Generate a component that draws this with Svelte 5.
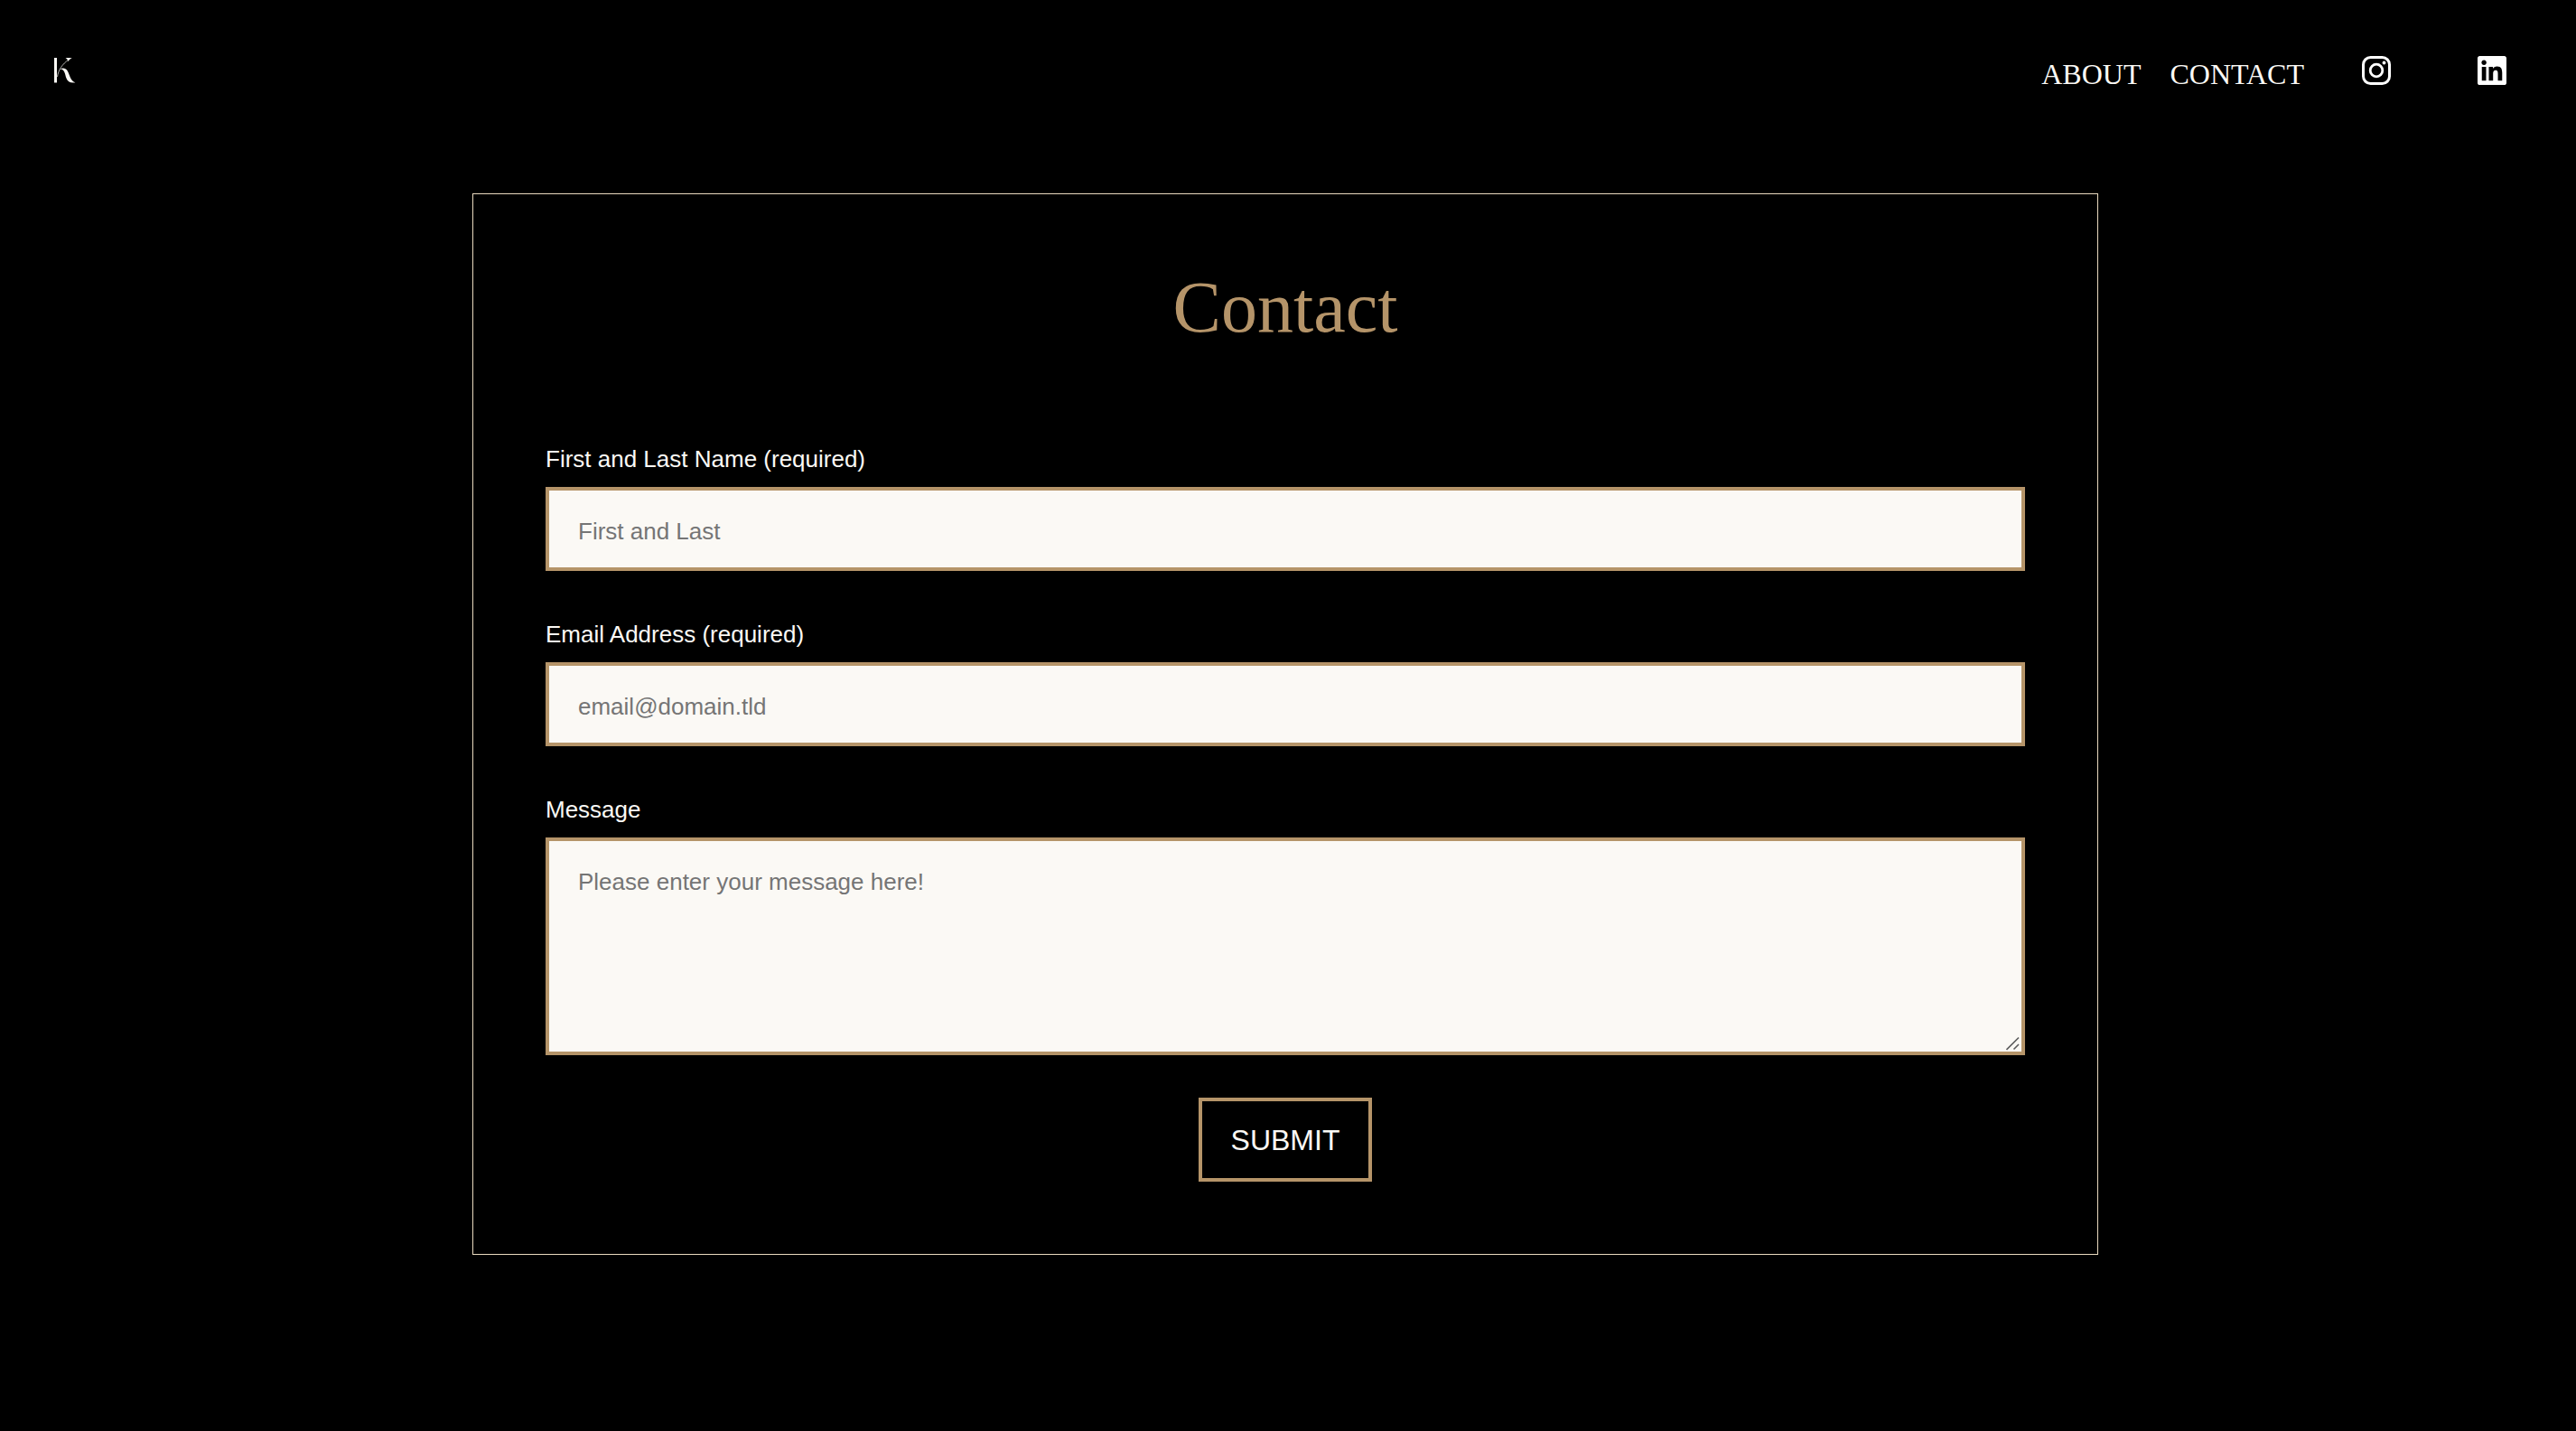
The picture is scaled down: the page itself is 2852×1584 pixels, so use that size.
<script>
  let name = $state('');
  let email = $state('');
  let message = $state('');

  function submit(event) {
    event.preventDefault();
  }
</script>

<svelte:head>
  <title>Contact</title>
</svelte:head>

<header>
  <a class="logo" href="/" aria-label="Home">
    <svg viewBox="0 0 24 28" aria-hidden="true">
      <rect x="0" y="0" width="3" height="27.5" fill="#fbf9f5" />
      <path d="M3.5 21C4.5 13.5 9 7 16 2" fill="none" stroke="#fbf9f5" stroke-width="0.7" />
      <path d="M12.5 0H19.8C17.8 1 16.6 2.2 15.4 4C15 2 14 0.7 12.5 0Z" fill="#fbf9f5" />
      <path
        d="M6.5 12.6C9 10.8 12.7 11 14.6 14.2C17.3 19 18 25.5 23.4 27.3C18.3 28.3 14.8 26.5 13.2 22C12 18 11.2 12 6.5 12.6Z"
        fill="#fbf9f5"
      />
    </svg>
  </a>
  <nav aria-label="Main">
    <a class="link" href="/about">ABOUT</a>
    <a class="link" href="/contact">CONTACT</a>
    <a class="social" href="/instagram" aria-label="Instagram">
      <svg viewBox="0 0 32 32" fill="none" stroke="#fff" aria-hidden="true">
        <rect x="1.5" y="1.5" width="29" height="29" rx="8" stroke-width="3" />
        <circle cx="16" cy="16" r="6.8" stroke-width="2.8" />
        <circle cx="24.5" cy="7.5" r="1.9" fill="#fff" stroke="none" />
      </svg>
    </a>
    <a class="social" href="/linkedin" aria-label="LinkedIn">
      <svg viewBox="0 0 24 24" fill="#fff" aria-hidden="true">
        <path
          d="M20.447 20.452h-3.554v-5.569c0-1.328-.027-3.037-1.852-3.037-1.853 0-2.136 1.445-2.136 2.939v5.667H9.351V9h3.414v1.561h.046c.477-.9 1.637-1.85 3.37-1.85 3.601 0 4.267 2.37 4.267 5.455v6.286zM5.337 7.433c-1.144 0-2.063-.926-2.063-2.065 0-1.138.92-2.063 2.063-2.063 1.14 0 2.064.925 2.064 2.063 0 1.139-.925 2.065-2.064 2.065zm1.782 13.019H3.555V9h3.564v11.452zM22.225 0H1.771C.792 0 0 .774 0 1.729v20.542C0 23.227.792 24 1.771 24h20.451C23.2 24 24 23.227 24 22.271V1.729C24 .774 23.2 0 22.222 0h.003z"
        />
      </svg>
    </a>
  </nav>
</header>

<main>
  <section class="card">
    <h1>Contact</h1>
    <form onsubmit={submit}>
      <div class="field">
        <label for="name">First and Last Name (required)</label>
        <input id="name" type="text" placeholder="First and Last" required bind:value={name} />
      </div>
      <div class="field">
        <label for="email">Email Address (required)</label>
        <input id="email" type="email" placeholder="email@domain.tld" required bind:value={email} />
      </div>
      <div class="field">
        <label for="message">Message</label>
        <div class="area">
          <textarea id="message" placeholder="Please enter your message here!" bind:value={message}></textarea>
          <svg class="grip" viewBox="0 0 16 16" aria-hidden="true">
            <path d="M0.5 15L14 1.5M8.5 14.5L14 9" fill="none" stroke="#5c5c5c" stroke-width="1.6" />
          </svg>
        </div>
      </div>
      <button type="submit">SUBMIT</button>
    </form>
  </section>
</main>

<style>
  :global(body) {
    background: #000;
    color: #fbf9f5;
    font-family: 'Liberation Sans', Arial, sans-serif;
  }

  header {
    display: flex;
    align-items: center;
    justify-content: space-between;
    height: 156px;
    padding: 0 77px 0 60px;
    box-sizing: border-box;
  }

  .logo svg {
    display: block;
    width: 24px;
    height: 28px;
  }

  nav {
    display: flex;
    align-items: center;
    gap: 32px;
  }

  .link {
    padding-top: 8px;
    color: inherit;
    font-family: 'Liberation Serif', 'Times New Roman', serif;
    font-size: 32px;
    line-height: 36px;
    text-decoration: none;
  }

  .social {
    margin-left: 32px;
  }

  .social + .social {
    margin-left: 64px;
  }

  .social svg {
    display: block;
    width: 32px;
    height: 32px;
  }

  main {
    display: flex;
    justify-content: center;
    padding: 58px 6px 58px 0;
  }

  .card {
    width: 100%;
    max-width: 1800px;
    padding: 80px;
    border: 1px solid #e9dabf;
    box-sizing: border-box;
  }

  h1 {
    margin: 0 0 108px;
    color: #b59469;
    font-family: 'Liberation Serif', 'Times New Roman', serif;
    font-size: 80px;
    font-weight: 400;
    line-height: 90px;
    text-align: center;
  }

  form {
    display: flex;
    flex-direction: column;
  }

  .field {
    display: flex;
    flex-direction: column;
    gap: 15px;
    margin-bottom: 55px;
  }

  .field:last-of-type {
    margin-bottom: 47px;
  }

  label {
    font-size: 26px;
    line-height: 31px;
  }

  input,
  textarea {
    display: block;
    width: 100%;
    margin: 0;
    padding: 30px 32px 24px;
    border: 4px solid #b59469;
    border-radius: 0;
    box-sizing: border-box;
    background: #fbf9f5;
    color: #000;
    font-family: inherit;
    font-size: 26px;
    line-height: 31px;
  }

  input {
    height: 93px;
  }

  textarea {
    height: 241px;
    resize: vertical;
  }

  textarea::-webkit-resizer {
    background: transparent;
  }

  ::placeholder {
    color: #757575;
    opacity: 1;
  }

  .area {
    position: relative;
  }

  .grip {
    position: absolute;
    right: 5px;
    bottom: 5px;
    width: 16px;
    height: 16px;
    pointer-events: none;
  }

  button {
    align-self: center;
    padding: 25px 32px 23px;
    border: 4px solid #b59469;
    border-radius: 0;
    background: #000;
    color: #fbf9f5;
    font-family: inherit;
    font-size: 32px;
    line-height: 37px;
    cursor: pointer;
  }
</style>
